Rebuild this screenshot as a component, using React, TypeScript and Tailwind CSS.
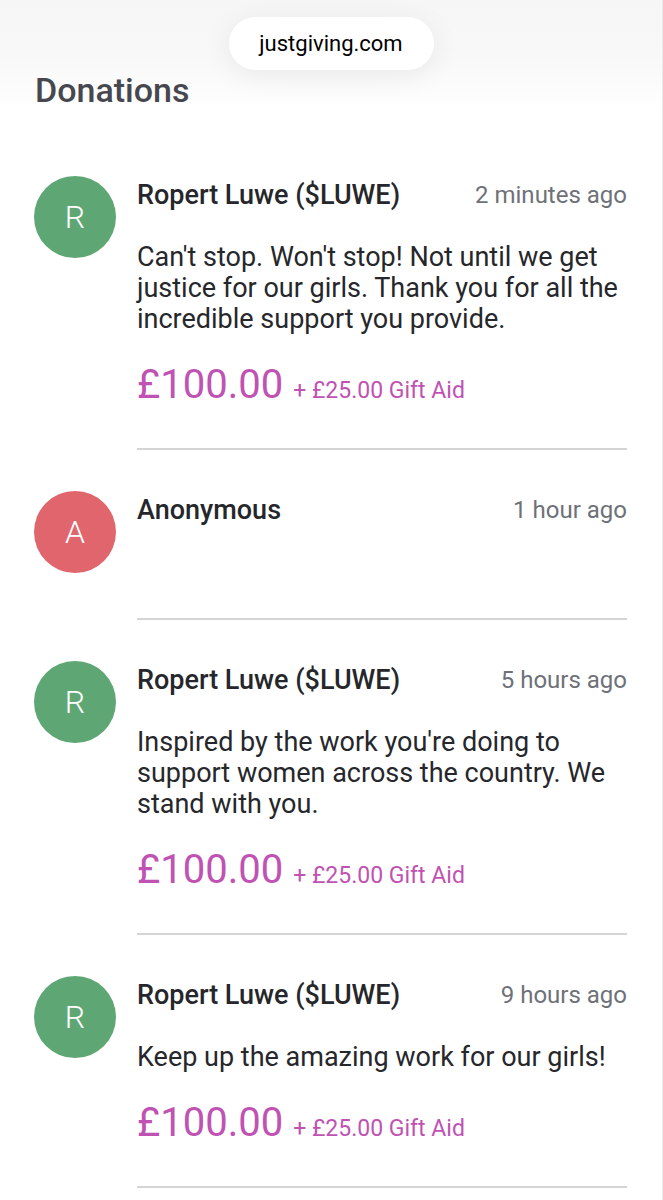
import React from "react";

type Donation = {
  initial: string;
  name: string;
  time: string;
  message?: string;
  amount?: string;
  giftAid?: string;
  color: string;
};

const donations: Donation[] = [
  {
    initial: "R",
    name: "Ropert Luwe ($LUWE)",
    time: "2 minutes ago",
    message:
      "Can't stop. Won't stop! Not until we get justice for our girls. Thank you for all the incredible support you provide.",
    amount: "£100.00",
    giftAid: "+ £25.00 Gift Aid",
    color: "bg-[#5ea774]",
  },
  {
    initial: "A",
    name: "Anonymous",
    time: "1 hour ago",
    color: "bg-[#e0656d]",
  },
  {
    initial: "R",
    name: "Ropert Luwe ($LUWE)",
    time: "5 hours ago",
    message:
      "Inspired by the work you're doing to support women across the country. We stand with you.",
    amount: "£100.00",
    giftAid: "+ £25.00 Gift Aid",
    color: "bg-[#5ea774]",
  },
  {
    initial: "R",
    name: "Ropert Luwe ($LUWE)",
    time: "9 hours ago",
    message: "Keep up the amazing work for our girls!",
    amount: "£100.00",
    giftAid: "+ £25.00 Gift Aid",
    color: "bg-[#5ea774]",
  },
];

function DonationRow({ d }: { d: Donation }) {
  return (
    <div className="flex gap-[21px] pt-[41px]">
      <div
        className={`flex h-[82px] w-[82px] shrink-0 items-center justify-center rounded-full ${d.color} text-[32px] font-light text-white`}
      >
        {d.initial}
      </div>
      <div className="min-h-[129px] flex-1 border-b-2 border-[#d4d4d4] pt-[4px] pb-[39px]">
        <div className="flex items-center justify-between leading-[30px]">
          <span className="text-[27px] font-medium text-[#26272b]">{d.name}</span>
          <span className="text-[24px] text-[#6e7178]">{d.time}</span>
        </div>
        {d.message && (
          <p className="mt-[32px] text-[27px] leading-[31px] text-[#26272b]">{d.message}</p>
        )}
        {d.amount && (
          <div className="mt-[26px] flex h-[48px] items-baseline gap-[10px] text-[#c052b3]">
            <span className="text-[40px] leading-[48px]">{d.amount}</span>
            <span className="text-[23px] leading-[24px]">{d.giftAid}</span>
          </div>
        )}
      </div>
    </div>
  );
}

export default function App() {
  return (
    <div className="min-h-[1200px] w-[663px] overflow-hidden border-r border-[#ececec] bg-white font-['Roboto',sans-serif]">
      <div className="bg-gradient-to-b from-[#f6f6f6] via-[#f8f8f8] to-white px-[35px] pt-[17px]">
        <div className="flex justify-center">
          <div className="flex h-[53px] w-[205px] items-center justify-center rounded-full bg-white text-[22px] text-black shadow-[0_6px_30px_rgba(0,0,0,0.07)]">
            justgiving.com
          </div>
        </div>
        <h1 className="mb-[25px] text-[34px] font-medium leading-[40px] text-[#47484f]">Donations</h1>
      </div>
      <div className="pr-[35px] pl-[34px]">
        {donations.map((d, i) => (
          <DonationRow key={i} d={d} />
        ))}
      </div>
    </div>
  );
}
